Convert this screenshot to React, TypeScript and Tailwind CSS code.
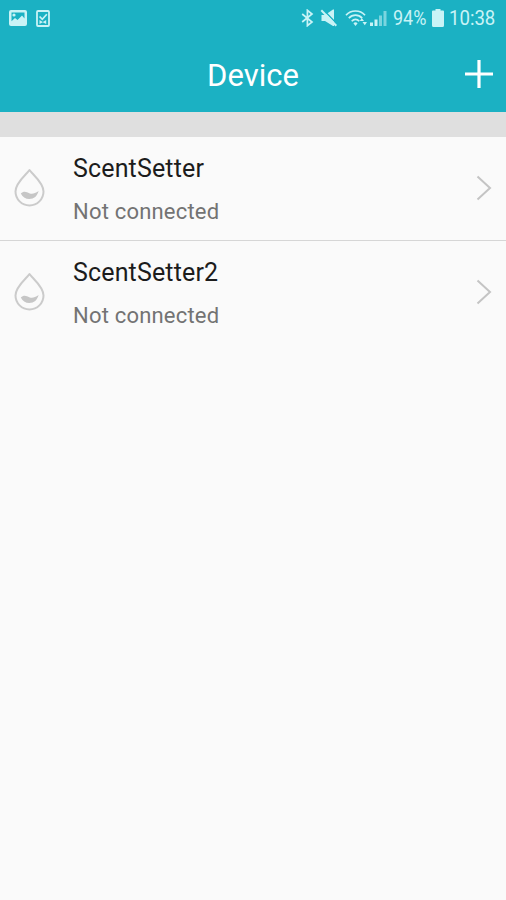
import React from 'react';

interface Device {
  name: string;
  status: string;
}

const devices: Device[] = [
  { name: 'ScentSetter', status: 'Not connected' },
  { name: 'ScentSetter2', status: 'Not connected' },
];

const StatusBar: React.FC = () => (
  <div className="flex h-9 items-center justify-between pl-[9px] pr-[10px] text-[#c9f3f6]">
    <div className="flex items-center gap-[9px]">
      <svg width="18" height="16" viewBox="0 0 18 16">
        <path fill="currentColor" fillRule="evenodd" d="M2 0h14a2 2 0 0 1 2 2v12a2 2 0 0 1-2 2H2a2 2 0 0 1-2-2V2a2 2 0 0 1 2-2zM2.5 2.5v8.7L6 8l2.5 2L13 5.5l2.5 3v-6z" />
        <circle cx="5" cy="5" r="1.6" fill="currentColor" />
      </svg>
      <svg width="14" height="17" viewBox="0 0 14 17" fill="none" stroke="currentColor">
        <rect x="1" y="1" width="12" height="15" rx="1" strokeWidth="1.8" />
        <path strokeWidth="1.7" d="M3.6 6.5L6.3 9.300 10.800 4.300" />
        <path fill="currentColor" stroke="none" d="M3.500 10l3.300 2 3.400-2v4l-3.400-1.800L3.500 14z" />
      </svg>
    </div>
    <div className="flex items-center">
      <svg width="13" height="18" viewBox="0 0 13 18" fill="none" stroke="currentColor" strokeWidth="1.7">
        <path d="M1.2 5l9.8 8-4.6 3.7V1.3L11 5l-9.8 8" />
      </svg>
      <svg className="ml-[6px]" width="18" height="18" viewBox="0 0 18 18">
        <path fill="currentColor" d="M1.500 6H5l8-5.500h1V17h-1l-8-5H1.500z" />
        <path stroke="#1bb1c3" strokeWidth="1.4" d="M2.800 0.200l15 15.500" />
        <path stroke="currentColor" strokeWidth="2" d="M1.300 1.300l15 15.500" />
      </svg>
      <svg className="ml-[7px]" width="24" height="18" viewBox="0 0 24 18" fill="none" stroke="currentColor" strokeWidth="1.7">
        <path d="M1 6.2C6 0.6 15 0.6 20 6.2" />
        <path d="M3.8 9.2c3.8-4 9.6-4 13.4 0" />
        <path d="M6.7 12.2c2.2-2.4 5.4-2.4 7.6 0" />
        <path fill="currentColor" stroke="none" d="M8.400 14.200a3 3 0 0 1 4.200 0L10.500 17zM14.800 12l2-3 2.200 3zM17.500 13h4.500l-2.200 3.200z" />
      </svg>
      <svg className="ml-px" width="17" height="16" viewBox="0 0 17 16" fill="currentColor">
        <path d="M0 12.5h3V16H0zM4.5 9.5h3V16h-3z" />
        <path d="M9 5.5h3V16H9zM13.5 1h3v15h-3z" opacity=".55" />
      </svg>
      <span className="ml-[6px] w-[35px] origin-left scale-x-[0.9] whitespace-nowrap text-[20px] leading-9">94%</span>
      <svg className="ml-[4px]" width="12" height="18" viewBox="0 0 12 18">
        <path fill="currentColor" d="M3.5 0h5v1.500H11a1 1 0 0 1 1 1v14a1.500 1.500 0 0 1-1.500 1.500h-9A1.500 1.500 0 0 1 0 16.500v-14a1 1 0 0 1 1-1h2.500z" />
      </svg>
      <span className="ml-[5px] w-[47px] origin-left scale-x-[0.93] whitespace-nowrap text-[20px] leading-9">10:38</span>
    </div>
  </div>
);

const DropIcon: React.FC = () => (
  <svg className="mb-[2px] ml-[14px] shrink-0" width="32" height="40" viewBox="0 0 32 40">
    <path fill="none" stroke="#cbcbcb" strokeWidth="2" strokeLinejoin="round" d="M15.5 2C12 7 1.5 14.500 1.500 23.500a14 14 0 0 0 28 0C29.500 14.500 19 7 15.500 2z" />
    <path fill="#c6c6c6" d="M6.800 25.500c3-3 6-1.500 8.500-.3 3 1.200 5.500.2 9.300-2.200-1.300 5-4.600 8-9.300 8-3.800 0-7-2-8.500-5.500z" />
  </svg>
);

const DeviceRow: React.FC<{ device: Device }> = ({ device }) => (
  <div className="flex h-26 items-center border-b border-[#d6d6d6] last:border-transparent">
    <DropIcon />
    <div className="ml-[27px] flex-1 pt-[2px]">
      <div className="text-[25px] leading-[43px] tracking-[0.15px] text-[#1c1c1c]">{device.name}</div>
      <div className="text-[22px] leading-[43px] tracking-[0.2px] text-[#737373]">{device.status}</div>
    </div>
    <svg className="mr-[14px] mb-[2px]" width="16" height="26" viewBox="0 0 16 26" fill="none" stroke="#c4c4c4" strokeWidth="2">
      <path d="M1.500 1.500L14 13 1.500 24.500" />
    </svg>
  </div>
);

const App: React.FC = () => {
  return (
    <div className="min-h-screen w-full bg-[#fafafa] font-['Roboto',sans-serif]">
      <header className="h-28 bg-[#1bb1c3]">
        <StatusBar />
        <div className="grid h-[76px] grid-cols-[1fr_auto_1fr] items-center px-[13px] text-white">
          <h1 className="col-start-2 pt-[2px] text-[31px] leading-none">Device</h1>
          <svg className="justify-self-end" width="28" height="28" viewBox="0 0 28 28" stroke="currentColor" strokeWidth="3.2">
            <path d="M14 0v28M0 14h28" />
          </svg>
        </div>
      </header>
      <div className="h-[25px] bg-[#dfdfdf]" />
      <main>
        {devices.map((device) => (
          <DeviceRow key={device.name} device={device} />
        ))}
      </main>
    </div>
  );
};

export default App;
